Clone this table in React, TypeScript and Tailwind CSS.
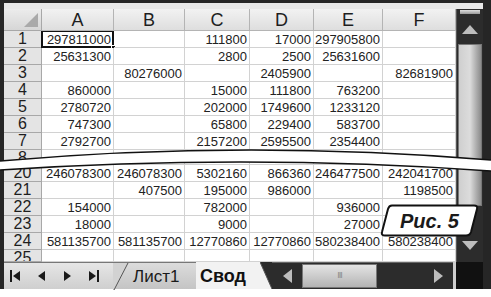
import React from 'react';

// Spreadsheet excerpt ("Рис. 5") – grayscale Excel 2007 look with a torn break

const COLS = [
  { name: 'A', w: 'w-[72px]' },
  { name: 'B', w: 'w-[71px]' },
  { name: 'C', w: 'w-[65px]' },
  { name: 'D', w: 'w-[64px]' },
  { name: 'E', w: 'w-[69px]' },
  { name: 'F', w: 'w-[73px]' },
];

type Row = { n: string; h: string; cells: string[] };

const ROWS: Row[] = [
  { n: '1', h: 'h-[17px]', cells: ['297811000', '', '111800', '17000', '297905800', ''] },
  { n: '2', h: 'h-[17px]', cells: ['25631300', '', '2800', '2500', '25631600', ''] },
  { n: '3', h: 'h-[17px]', cells: ['', '80276000', '', '2405900', '', '82681900'] },
  { n: '4', h: 'h-[17px]', cells: ['860000', '', '15000', '111800', '763200', ''] },
  { n: '5', h: 'h-[17px]', cells: ['2780720', '', '202000', '1749600', '1233120', ''] },
  { n: '6', h: 'h-[17px]', cells: ['747300', '', '65800', '229400', '583700', ''] },
  { n: '7', h: 'h-[17px]', cells: ['2792700', '', '2157200', '2595500', '2354400', ''] },
  { n: '8', h: 'h-[15px]', cells: ['', '', '', '', '', ''] },
  { n: '20', h: 'h-[17px]', cells: ['246078300', '246078300', '5302160', '866360', '246477500', '242041700'] },
  { n: '21', h: 'h-[17px]', cells: ['', '407500', '195000', '986000', '', '1198500'] },
  { n: '22', h: 'h-[17px]', cells: ['154000', '', '782000', '', '936000', ''] },
  { n: '23', h: 'h-[17px]', cells: ['18000', '', '9000', '', '27000', ''] },
  { n: '24', h: 'h-[17px]', cells: ['581135700', '581135700', '12770860', '12770860', '580238400', '580238400'] },
  { n: '25', h: 'h-[12px]', cells: ['', '', '', '', '', ''] },
];

function Grid() {
  return (
    <div className="w-[452px] flex flex-col bg-white">
      {/* column headers */}
      <div className="flex h-[22px]">
        <div className="relative w-[38px] h-full bg-gradient-to-b from-[#ececec] to-[#d6d6d6] border-r border-b border-[#a8a8a8]">
          <svg className="absolute right-[3px] bottom-[3px]" width="14" height="14" viewBox="0 0 14 14">
            <polygon points="14,0 14,14 0,14" fill="#a9a9a9" />
          </svg>
        </div>
        {COLS.map((c) => (
          <div
            key={c.name}
            className={`${c.w} h-full flex items-center justify-center bg-gradient-to-b from-[#f2f2f2] to-[#dedede] border-r border-b border-[#b4b4b4] text-[18px] leading-none text-[#1e1e1e]`}
          >
            {c.name}
          </div>
        ))}
      </div>

      {ROWS.map((r) => (
        <div key={r.n} className={`flex ${r.h} overflow-hidden`}>
          <div className="w-[38px] h-full overflow-hidden flex items-start justify-center bg-[#e4e4e4] border-r border-b border-[#a8a8a8] text-[16px] leading-[15px] text-[#1e1e1e]">
            {r.n}
          </div>
          {r.cells.map((v, i) => (
            <div
              key={i}
              className={`relative ${COLS[i].w} h-full flex items-center justify-end pr-[2px] border-r border-b border-[#d2d2d2] text-[13px] leading-none text-[#222]`}
            >
              {v}
              {r.n === '1' && i === 0 && (
                <span className="absolute -left-[1px] -top-[1px] -right-[1px] -bottom-[1px] border-2 border-[#111]">
                  <span className="absolute -right-[4px] -bottom-[4px] w-[5px] h-[5px] bg-[#111] border border-white" />
                </span>
              )}
            </div>
          ))}
        </div>
      ))}
    </div>
  );
}

function VScroll() {
  return (
    <div className="w-[27px] flex flex-col bg-[#2c2c2c] border-l border-[#555]">
      <div className="mx-[3px] mt-[1px] h-[4px] bg-gradient-to-b from-[#e0e0e0] to-[#9a9a9a]" />
      <div className="h-[30px] flex items-center justify-center">
        <svg width="16" height="9" viewBox="0 0 16 9">
          <polygon points="8,0 16,9 0,9" fill="#bdbdbd" />
        </svg>
      </div>
      <div className="mx-[1px] h-[162px] bg-gradient-to-r from-[#cfcfcf] via-[#dcdcdc] to-[#8c8c8c] border border-[#777]" />
      <div className="flex-1" />
      <div className="h-[24px] flex items-start justify-center pt-[3px]">
        <svg width="16" height="9" viewBox="0 0 16 9">
          <polygon points="0,0 16,0 8,9" fill="#bdbdbd" />
        </svg>
      </div>
    </div>
  );
}

function TabBar() {
  return (
    <div className="flex h-[27px] bg-[#111]">
      {/* navigation buttons */}
      <div className="w-[109px] h-full flex items-center bg-gradient-to-b from-[#e6e6e6] to-[#cfcfcf] border-t border-[#777] pl-[6px] gap-[15px]">
        <svg width="11" height="12" viewBox="0 0 11 12">
          <rect x="0" y="0" width="2" height="12" fill="#1a1a1a" />
          <polygon points="3,6 10,1 10,11" fill="#1a1a1a" />
        </svg>
        <svg width="11" height="12" viewBox="0 0 11 12">
          <polygon points="2,6 9,1 9,11" fill="#1a1a1a" />
        </svg>
        <svg width="11" height="12" viewBox="0 0 11 12">
          <polygon points="9,6 2,1 2,11" fill="#1a1a1a" />
        </svg>
        <svg width="11" height="12" viewBox="0 0 11 12">
          <polygon points="8,6 1,1 1,11" fill="#1a1a1a" />
          <rect x="9" y="0" width="2" height="12" fill="#1a1a1a" />
        </svg>
      </div>

      {/* sheet tabs */}
      <div className="relative w-[83px] h-full flex items-center pl-[20px] bg-gradient-to-b from-[#dcdcdc] to-[#c4c4c4] border-t border-[#777] text-[17px] leading-none text-[#1a1a1a]">
        <svg className="absolute left-0 top-0" width="16" height="27" viewBox="0 0 16 27">
          <polygon points="0,0 15,0 1,27 0,27" fill="#d2d2d2" />
          <line x1="15" y1="0" x2="1" y2="27" stroke="#555" strokeWidth="1" />
        </svg>
        Лист1
      </div>
      <div className="relative w-[76px] h-full flex items-center pl-[4px] bg-[#f2f2f2] text-[18px] font-bold leading-none text-[#111]">
        Свод
        <svg className="absolute right-0 top-0" width="12" height="27" viewBox="0 0 12 27">
          <polygon points="0,0 12,0 12,27" fill="#2c2c2c" />
          <line x1="0" y1="0" x2="12" y2="27" stroke="#555" strokeWidth="1" />
        </svg>
      </div>

      {/* horizontal scrollbar */}
      <div className="w-[181px] h-full flex items-center bg-[#2c2c2c] border-t border-[#666]">
        <div className="w-[30px] flex justify-center">
          <svg width="9" height="14" viewBox="0 0 9 14">
            <polygon points="0,7 9,0 9,14" fill="#bdbdbd" />
          </svg>
        </div>
        <div className="w-[75px] h-[24px] flex items-center justify-center bg-gradient-to-b from-[#e4e4e4] to-[#b4b4b4] border border-[#777] text-[9px] tracking-[-1px] text-[#8a8a8a]">
          III
        </div>
        <div className="flex-1" />
        <div className="w-[30px] flex justify-center">
          <svg width="9" height="14" viewBox="0 0 9 14">
            <polygon points="9,7 0,0 0,14" fill="#bdbdbd" />
          </svg>
        </div>
      </div>
      <div className="w-[3px] h-full bg-[#cfcfcf]" />
      <div className="flex-1 h-full bg-[#111]" />
    </div>
  );
}

export default function App() {
  return (
    <div className="relative w-[491px] h-[297px] bg-white overflow-hidden font-['Liberation_Sans',Arial,sans-serif]">
      <div className="w-[491px] flex flex-col bg-[#262626] pt-[3px] pl-[4px] pr-[8px]">
        <div className="h-[6px] bg-[#e8e8e8]" />
        <div className="flex">
          <Grid />
          <VScroll />
        </div>
        <TabBar />
      </div>

      {/* torn break between row 8 and row 20 */}
      <svg className="absolute left-0 top-0 pointer-events-none" width="491" height="297" viewBox="0 0 491 297">
        <path d="M0 161 Q245 139.5 491 160 L491 171 Q250 153.5 0 170 Z" fill="#fff" />
        <path d="M0 161 Q245 139.5 491 160" fill="none" stroke="#111" strokeWidth="1.5" />
        <path d="M0 170 Q250 153.5 491 171" fill="none" stroke="#111" strokeWidth="1.5" />
      </svg>

      {/* figure label */}
      <div className="absolute left-[380px] top-[204px] w-[99px] h-[33px] flex items-center justify-center">
        <svg className="absolute inset-0" width="99" height="33" viewBox="0 0 99 33">
          <path
            d="M12 1.5 L94 1.5 Q98 1.5 97 5 L91 28 Q90 31.5 86 31.5 L5 31.5 Q1 31.5 2 28 L8 5 Q9 1.5 12 1.5 Z"
            fill="#fff"
            stroke="#111"
            strokeWidth="2"
          />
        </svg>
        <span className="relative text-[20px] font-bold italic leading-none text-[#1a1a1a]">Рис. 5</span>
      </div>
    </div>
  );
}
